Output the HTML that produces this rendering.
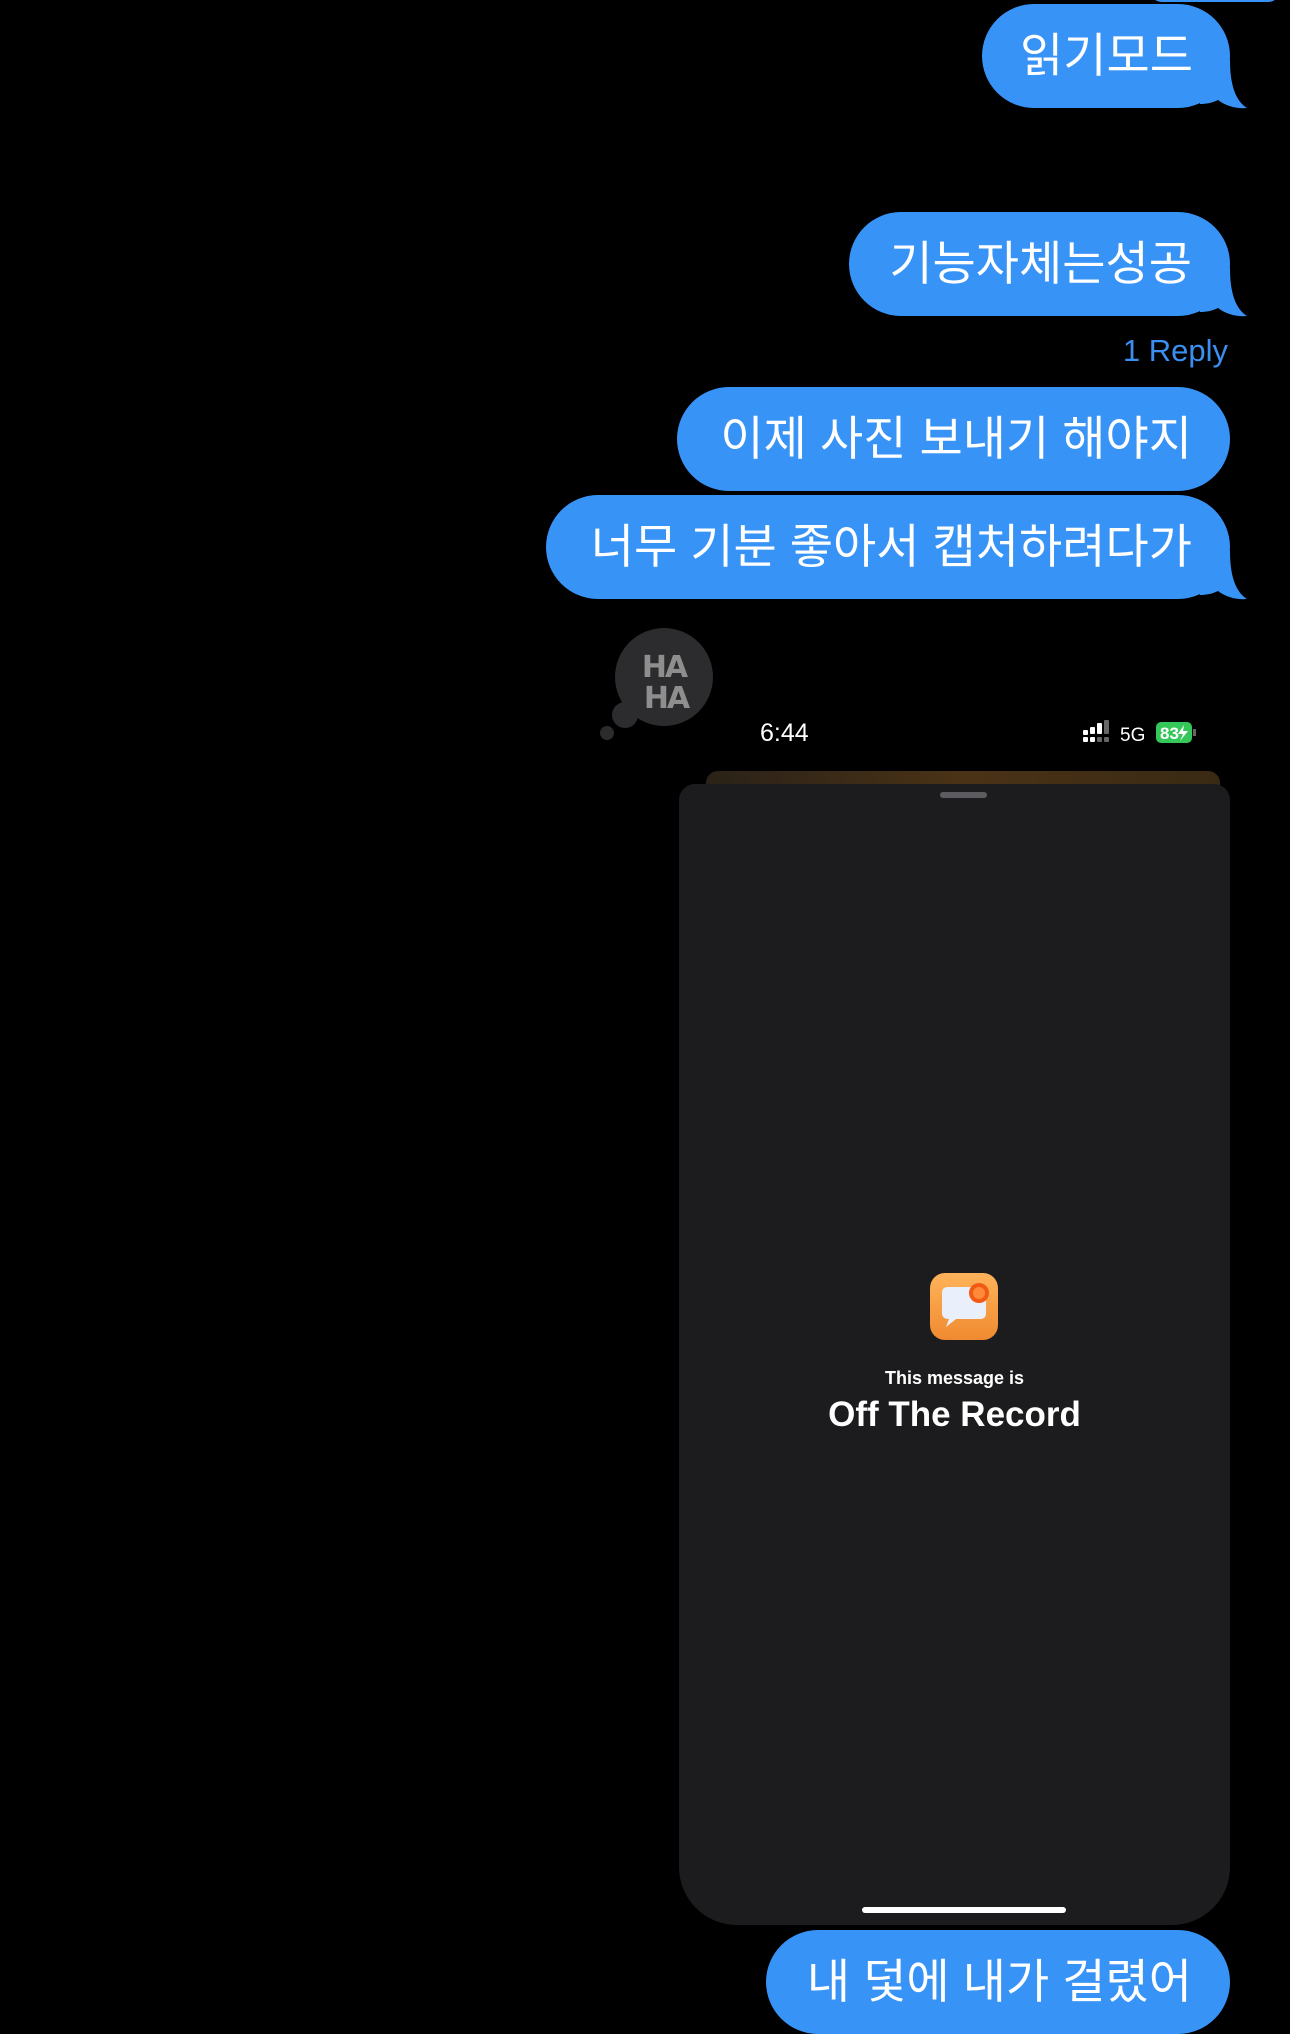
<!DOCTYPE html>
<html><head><meta charset="utf-8">
<style>
html,body{margin:0;padding:0;background:#000;}
body{width:1290px;height:2022px;position:relative;overflow:hidden;font-family:"Liberation Sans","Noto Sans CJK KR",sans-serif;}
.b{position:absolute;background:#3893f7;color:#fff;border-radius:52px;height:104px;box-sizing:border-box;padding:0 38px 0 38px;font-size:47px;line-height:104px;text-align:right;white-space:nowrap;font-family:"Liberation Sans","Noto Sans CJK KR",sans-serif;}
.tail{position:absolute;}
.abs{position:absolute;}
</style></head><body>

<div class="abs" style="left:1150px;top:-10px;width:130px;height:12px;background:#3893f7;border-radius:0 0 30px 30px"></div>

<div class="b" style="left:982px;top:4px;width:248px;">읽기모드</div>
<svg class="tail" style="left:1200px;top:60px" width="50" height="50"><path d="M0 0 H30 C30 26 36 41 47 48 C36 49 26 46 18 40 C12 43 6 44 0 44Z" fill="#3893f7"/></svg>

<div class="b" style="left:849px;top:212px;width:381px;">기능자체는성공</div>
<svg class="tail" style="left:1200px;top:268px" width="50" height="50"><path d="M0 0 H30 C30 26 36 41 47 48 C36 49 26 46 18 40 C12 43 6 44 0 44Z" fill="#3893f7"/></svg>

<div class="abs" style="left:1100px;top:330px;width:128px;text-align:right;color:#3a8ff0;font-size:31px;line-height:42px;">1 Reply</div>

<div class="b" style="left:677px;top:387px;width:553px;">이제 사진 보내기 해야지</div>
<div class="b" style="left:546px;top:495px;width:684px;">너무 기분 좋아서 캡처하려다가</div>
<svg class="tail" style="left:1200px;top:551px" width="50" height="50"><path d="M0 0 H30 C30 26 36 41 47 48 C36 49 26 46 18 40 C12 43 6 44 0 44Z" fill="#3893f7"/></svg>

<!-- screenshot -->
<div class="abs" style="left:706px;top:771px;width:514px;height:30px;border-radius:12px 12px 0 0;background:linear-gradient(90deg,#2a2218,#4a3216 50%,#3a2a14);"></div>
<div class="abs" style="left:679px;top:784px;width:551px;height:1141px;background:#1c1c1e;border-radius:16px 16px 58px 58px;"></div>
<div class="abs" style="left:940px;top:792px;width:47px;height:6px;border-radius:3px;background:#5c5c60"></div>
<div class="abs" style="left:760px;top:716px;color:#fff;font-size:25px;line-height:34px;">6:44</div>
<svg class="abs" style="left:1080px;top:720px" width="120" height="26">
<rect x="3" y="10" width="5" height="5" rx="1" fill="#fff"/><rect x="3" y="17" width="5" height="5" rx="1" fill="#fff"/>
<rect x="10" y="7" width="5" height="7" rx="1" fill="#fff"/><rect x="10" y="17" width="5" height="5" rx="1" fill="#fff"/>
<rect x="17" y="3" width="5" height="11" fill="#fff" rx="1"/><rect x="17" y="17" width="5" height="5" rx="1" fill="#666"/>
<rect x="24" y="0" width="5" height="14" fill="#666" rx="1"/><rect x="24" y="17" width="5" height="5" rx="1" fill="#666"/>
<text x="40" y="21" fill="#fff" font-size="19" font-family="Liberation Sans">5G</text>
<rect x="76" y="2" width="36" height="21" rx="5" fill="#34c759"/><rect x="113" y="9" width="3" height="7" fill="#666"/>
<text x="80" y="19" fill="#fff" font-size="17" font-weight="bold" font-family="Liberation Sans">83</text>
<path d="M104 5 L98 14 H103 L100 21 L108 11 H103Z" fill="#fff"/>
</svg>

<svg class="abs" style="left:930px;top:1273px" width="68" height="67">
<defs><linearGradient id="g" x1="0" y1="0" x2="0" y2="1"><stop offset="0" stop-color="#ffb35a"/><stop offset="1" stop-color="#f08a30"/></linearGradient></defs>
<rect width="68" height="67" rx="15" fill="url(#g)"/>
<path d="M12 20 Q12 14 18 14 H50 Q56 14 56 20 V40 Q56 46 50 46 H26 L16 54 L19 46 Q12 46 12 40Z" fill="#eaf0fb"/>
<circle cx="49" cy="20" r="10" fill="#f05a14"/><circle cx="49" cy="20" r="6" fill="#ff8a3a"/>
</svg>
<div class="abs" style="left:679px;top:1366px;width:551px;text-align:center;color:#fff;font-size:18px;font-weight:bold;line-height:24px;">This message is</div>
<div class="abs" style="left:679px;top:1393px;width:551px;text-align:center;color:#fff;font-size:35px;font-weight:bold;line-height:44px;">Off The Record</div>
<div class="abs" style="left:862px;top:1907px;width:204px;height:6px;border-radius:3px;background:#fff"></div>

<!-- haha -->
<svg class="abs" style="left:595px;top:620px" width="130" height="125">
<circle cx="69" cy="57" r="49" fill="#2c2c2e"/>
<circle cx="30" cy="95" r="13" fill="#2c2c2e"/>
<circle cx="12" cy="113" r="7" fill="#2c2c2e"/>
<text x="69" y="57" text-anchor="middle" fill="#8e8e8e" font-size="30" font-weight="bold" font-family="DejaVu Sans" letter-spacing="-2">HA</text>
<text x="71" y="88" text-anchor="middle" fill="#8e8e8e" font-size="30" font-weight="bold" font-family="DejaVu Sans" letter-spacing="-2">HA</text>
</svg>

<div class="b" style="left:766px;top:1930px;width:464px;">내 덫에 내가 걸렸어</div>
</body></html>
